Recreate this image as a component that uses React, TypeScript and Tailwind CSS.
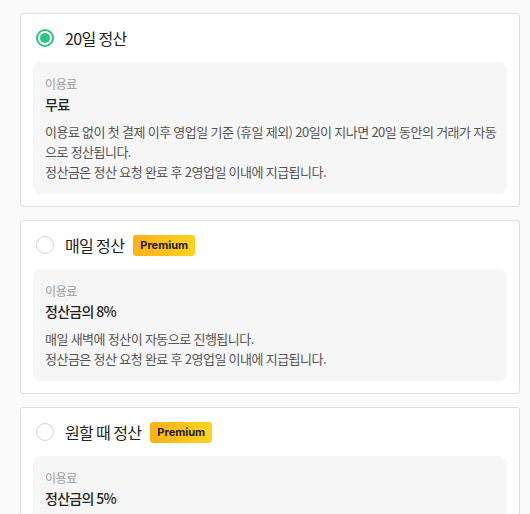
const font = { fontFamily: '"Noto Sans CJK KR", "Noto Sans", sans-serif' }

interface Plan {
  title: string
  premium: boolean
  fee: string
  lines: string[]
  checked: boolean
}

const plans: Plan[] = [
  {
    title: '20일 정산',
    premium: false,
    fee: '무료',
    lines: [
      '이용료 없이 첫 결제 이후 영업일 기준 (휴일 제외) 20일이 지나면 20일 동안의 거래가 자동',
      '으로 정산됩니다.',
      '정산금은 정산 요청 완료 후 2영업일 이내에 지급됩니다.',
    ],
    checked: true,
  },
  {
    title: '매일 정산',
    premium: true,
    fee: '정산금의 8%',
    lines: ['매일 새벽에 정산이 자동으로 진행됩니다.', '정산금은 정산 요청 완료 후 2영업일 이내에 지급됩니다.'],
    checked: false,
  },
  {
    title: '원할 때 정산',
    premium: true,
    fee: '정산금의 5%',
    lines: ['원하는 때에 정산을 요청할 수 있습니다.', '정산금은 정산 요청 완료 후 2영업일 이내에 지급됩니다.'],
    checked: false,
  },
]

function Radio({ checked }: { checked: boolean }) {
  if (checked) {
    return (
      <span className="w-[18px] h-[18px] rounded-full border-2 border-[#2bc480] bg-white flex items-center justify-center flex-shrink-0">
        <span className="w-[10px] h-[10px] rounded-full bg-[#2bc480]" />
      </span>
    )
  }
  return <span className="w-[18px] h-[18px] rounded-full border border-[#d3d3d8] bg-white flex-shrink-0" />
}

function PlanCard({ plan }: { plan: Plan }) {
  return (
    <div className="bg-white border border-[#dedee3] rounded-[3px] px-3 pt-3 pb-3">
      <div className="flex items-center h-6 pl-[3px]">
        <Radio checked={plan.checked} />
        <span className="ml-[11px] text-[16px] tracking-[-0.04em] text-[#222] leading-6">{plan.title}</span>
        {plan.premium && (
          <span
            className="ml-[9px] h-[21px] px-[7px] flex items-center rounded-[3px] bg-gradient-to-r from-[#ffb01b] to-[#ffd320] text-[11px] font-bold text-[#1a1a1a]"
            style={{ fontFamily: 'Inter, "Noto Sans", sans-serif' }}
          >
            Premium
          </span>
        )}
      </div>
      <div className="mt-3 bg-[#f6f6f6] rounded-[8px] pl-3 pr-3 pt-3.5 pb-3">
        <div className="text-[12px] leading-4 tracking-[-0.03em] text-[#9a9a9a]">이용료</div>
        <div className="mt-0.5 text-[14px] leading-5 font-medium tracking-[-0.05em] text-[#222]">{plan.fee}</div>
        <div className="mt-2 text-[13px] leading-5 tracking-[-0.04em] [word-spacing:0.4px] text-[#555]">
          {plan.lines.map((l, i) => (
            <div key={i} className="whitespace-nowrap">{l}</div>
          ))}
        </div>
      </div>
    </div>
  )
}

export default function App() {
  return (
    <div className="min-h-screen bg-[#fafafa] pt-[13px] pl-5" style={font}>
      <div className="w-[500px] flex flex-col gap-[13px]">
        {plans.map((p) => (
          <PlanCard key={p.title} plan={p} />
        ))}
      </div>
    </div>
  )
}
